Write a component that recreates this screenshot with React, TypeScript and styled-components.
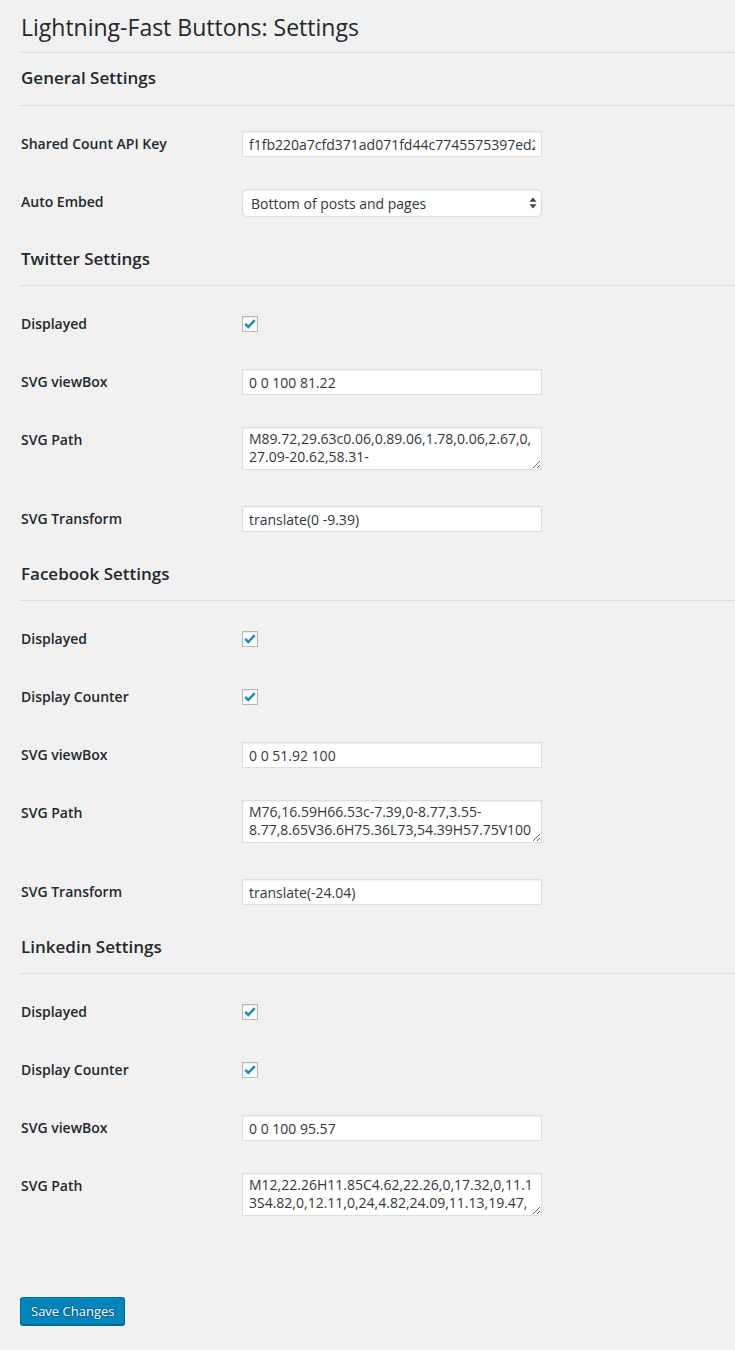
import styled, { createGlobalStyle } from 'styled-components'

type Field =
    | { kind: 'text', label: string, value: string }
    | { kind: 'area', label: string, value: string }
    | { kind: 'check', label: string }
    | { kind: 'select', label: string, value: string }

interface Section {
    title: string
    fields: Field[]
}

const sections: Section[] = [
    {
        title: 'General Settings',
        fields: [
            { kind: 'text', label: 'Shared Count API Key', value: 'f1fb220a7cfd371ad071fd44c7745575397ed2b4' },
            { kind: 'select', label: 'Auto Embed', value: 'Bottom of posts and pages' },
        ],
    },
    {
        title: 'Twitter Settings',
        fields: [
            { kind: 'check', label: 'Displayed' },
            { kind: 'text', label: 'SVG viewBox', value: '0 0 100 81.22' },
            { kind: 'area', label: 'SVG Path', value: 'M89.72,29.63c0.06,0.89.06,1.78,0.06,2.67,0,27.09-20.62,58.31-58.31,58.31A58,58,0,0,1,0,81.4a41.86,41.86,0,0,0,4.89.26,41.13,41.13,0,0,0,25.5-8.78A20.52,20.52,0,0,1,11.24,58.65' },
            { kind: 'text', label: 'SVG Transform', value: 'translate(0 -9.39)' },
        ],
    },
    {
        title: 'Facebook Settings',
        fields: [
            { kind: 'check', label: 'Displayed' },
            { kind: 'check', label: 'Display Counter' },
            { kind: 'text', label: 'SVG viewBox', value: '0 0 51.92 100' },
            { kind: 'area', label: 'SVG Path', value: 'M76,16.59H66.53c-7.39,0-8.77,3.55-8.77,8.65V36.6H75.36L73,54.39H57.75V100H39.38V54.39H24.07V36.6H39.38V23.49C39.38,8.28,48.69,0,62.24,0A126.2,126.2,0,0,1,76,.7Z' },
            { kind: 'text', label: 'SVG Transform', value: 'translate(-24.04)' },
        ],
    },
    {
        title: 'Linkedin Settings',
        fields: [
            { kind: 'check', label: 'Displayed' },
            { kind: 'check', label: 'Display Counter' },
            { kind: 'text', label: 'SVG viewBox', value: '0 0 100 95.57' },
            { kind: 'area', label: 'SVG Path', value: 'M12,22.26H11.85C4.62,22.26,0,17.32,0,11.13S4.82,0,12.11,0,24,4.82,24.09,11.13,19.47,22.26,12,22.26ZM22.71,95.57H1.34V31.14H22.71Z' },
        ],
    },
]

const GlobalStyle = createGlobalStyle`
    body {
        margin: 0;
        background: #f1f1f1;
        color: #23282d;
        font-family: "Open Sans", "Liberation Sans", sans-serif;
    }
`

const App = () => {
    return (
        <Page>
            <GlobalStyle />
            <Title>Lightning-Fast Buttons: Settings</Title>

            {sections.map(section => (
                <div key={section.title}>
                    <SectionTitle>{section.title}</SectionTitle>
                    <Table>
                        {section.fields.map((field, i) => (
                            <Row key={i} $tall={field.kind === 'area'}>
                                <Label>{field.label}</Label>
                                {renderField(field)}
                            </Row>
                        ))}
                    </Table>
                </div>
            ))}

            <SaveButton type="button">Save Changes</SaveButton>
        </Page>
    )
}

const renderField = (field: Field) => {
    switch (field.kind) {
        case 'text':
            return <TextInput type="text" defaultValue={field.value} />
        case 'area':
            return <PathArea defaultValue={field.value} spellCheck={false} />
        case 'check':
            return (
                <CheckBox role="checkbox" aria-checked="true">
                    <svg width="14" height="14" viewBox="0 0 14 14">
                        <path d="M2.2 6.9 L5.3 9.9 L11.8 3.2" fill="none" stroke="#1e8cbe" strokeWidth="2.5" />
                    </svg>
                </CheckBox>
            )
        case 'select':
            return (
                <SelectWrap>
                    <Select defaultValue={field.value}>
                        <option>{field.value}</option>
                        <option>Top of posts and pages</option>
                        <option>None</option>
                    </Select>
                    <SelectArrows width="8" height="12" viewBox="0 0 8 12">
                        <path d="M4 0.5 L7.5 4.8 H0.5 Z" fill="#444" />
                        <path d="M4 11.5 L7.5 7.2 H0.5 Z" fill="#444" />
                    </SelectArrows>
                </SelectWrap>
            )
    }
}

const Page = styled.div`
    padding: 0 0 24px 20px;
`

const Title = styled.h1`
    margin: 0;
    padding: 13px 0 10px 1px;
    font-size: 23px;
    font-weight: 400;
    line-height: 29px;
    border-bottom: 1px solid #ddd;
`

const SectionTitle = styled.h2`
    margin: 0;
    padding: 14px 0 14px 1px;
    font-size: 17px;
    font-weight: 600;
    line-height: 24px;
    border-bottom: 1px solid #ddd;

    div:first-of-type > & {
        padding: 13px 0 15px 1px;
    }
`

const Table = styled.div`
    padding-top: 9px;
`

const Row = styled.div<{ $tall?: boolean }>`
    display: flex;
    align-items: flex-start;
    padding: 15px 0 ${p => p.$tall ? '19px' : '15px'};
`

const Label = styled.div`
    flex: 0 0 221px;
    padding-left: 1px;
    font-size: 14px;
    font-weight: 600;
    line-height: 28px;
`

const fieldBase = `
    box-sizing: border-box;
    width: 300px;
    margin: 1px 0;
    border: 1px solid #ddd;
    background: #fff;
    color: #32373c;
    font-family: "Open Sans", "Liberation Sans", sans-serif;
    font-size: 14px;
    box-shadow: inset 0 1px 2px rgba(0, 0, 0, .07);
    outline: none;
`

const TextInput = styled.input`
    ${fieldBase}
    height: 26px;
    padding: 0 6px;
`

const PathArea = styled.textarea`
    ${fieldBase}
    height: 43px;
    padding: 2px 6px;
    line-height: 18px;
    overflow: hidden;
    resize: vertical;
`

const CheckBox = styled.span`
    display: flex;
    align-items: center;
    justify-content: center;
    box-sizing: border-box;
    width: 16px;
    height: 16px;
    margin-top: 6px;
    border: 1px solid #b4b9be;
    background: #fff;
    box-shadow: inset 0 1px 2px rgba(0, 0, 0, .1);
`

const SelectWrap = styled.div`
    position: relative;
    width: 300px;
    margin: 1px 0;
`

const Select = styled.select`
    ${fieldBase}
    margin: 0;
    height: 28px;
    padding: 0 24px 0 8px;
    border-radius: 5px;
    border-color: #ddd;
    appearance: none;
    -webkit-appearance: none;
`

const SelectArrows = styled.svg`
    position: absolute;
    right: 5px;
    top: 8px;
    pointer-events: none;
`

const SaveButton = styled.button`
    display: block;
    margin-top: 61px;
    height: 28px;
    padding: 0 10px 1px;
    border: 1px solid;
    border-color: #0073aa #006799 #006799;
    border-radius: 3px;
    background: #0085ba;
    box-shadow: 0 1px 0 #006799;
    color: #fff;
    font-family: "Open Sans", "Liberation Sans", sans-serif;
    font-size: 13px;
    font-weight: 500;
    line-height: 26px;
    text-shadow: 0 -1px 1px #006799, 1px 0 1px #006799, 0 1px 1px #006799, -1px 0 1px #006799;
    cursor: pointer;
`

export default App
